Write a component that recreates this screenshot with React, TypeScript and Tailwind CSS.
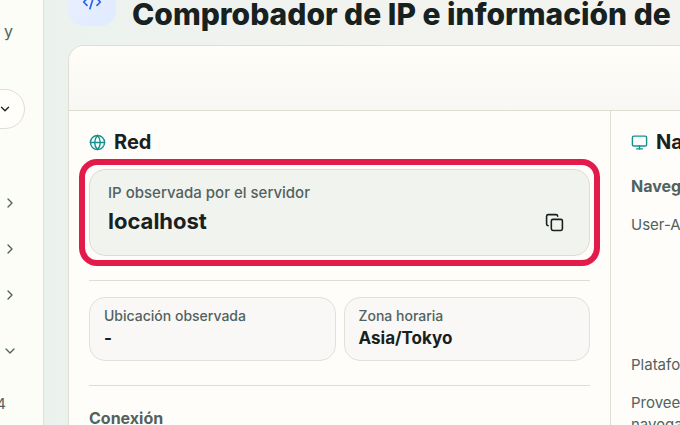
import type { ReactNode } from "react";
import { ChevronDown, ChevronRight, CodeXml, Copy, Globe, Monitor } from "lucide-react";

function PanelTitle({ icon, children }: { icon: ReactNode; children: ReactNode }) {
  return (
    <h2 className="flex h-6 items-center gap-2 text-[20px] leading-6 font-bold">
      <span className="shrink-0 text-[#14918f]">{icon}</span>
      {children}
    </h2>
  );
}

function Fact({ label, value }: { label: string; value: string }) {
  return (
    <div className="h-16 min-w-0 flex-1 rounded-[16px] border border-[#e1e1d8] bg-[#f9f8f6] px-3.5 py-2">
      <dt className="text-[14px] leading-5 font-medium text-[#51625f]">{label}</dt>
      <dd className="text-[17px] leading-6 font-bold">{value}</dd>
    </div>
  );
}

function Sidebar() {
  return (
    <aside className="flex w-11 shrink-0 flex-col items-end overflow-hidden border-r border-[#e2dfd3] bg-[#fdfdf8] text-[#51625f]">
      <p className="mt-[19px] mr-[30px] text-[16px] leading-6">y</p>
      <button
        type="button"
        aria-label="Abrir selector"
        className="mt-[46px] mr-[18px] flex h-10 w-24 shrink-0 items-center justify-end rounded-full border border-[#e0ddd2] bg-[#fffefa] pr-3 text-[#17211f]"
      >
        <ChevronDown size={14} strokeWidth={2.2} />
      </button>
      <nav className="mt-[51px] mr-[25px] flex flex-col items-end">
        <button type="button" aria-label="Grupo 1" className="flex h-[46px] items-center">
          <ChevronRight size={16} />
        </button>
        <button type="button" aria-label="Grupo 2" className="flex h-[46px] items-center">
          <ChevronRight size={16} />
        </button>
        <button type="button" aria-label="Grupo 3" className="flex h-[46px] items-center">
          <ChevronRight size={16} />
        </button>
        <button type="button" aria-label="Grupo 4" className="mt-2.5 flex h-[46px] items-center">
          <ChevronDown size={16} />
        </button>
      </nav>
      <p className="mt-[18px] mr-[37px] text-[15px] leading-6">4</p>
    </aside>
  );
}

export default function App() {
  return (
    <div className="flex h-screen overflow-hidden bg-linear-to-r from-[#eaf2ee] via-[#f2f3ef] to-[#f4f3ef] font-[Inter,'Noto_Sans',sans-serif] text-[#17211f]">
      <Sidebar />
      <main className="flex min-w-0 flex-1 flex-col pl-6">
        <header className="flex h-[26px] shrink-0 items-end gap-4">
          <div className="flex size-12 shrink-0 items-center justify-center rounded-[16px] bg-linear-to-br from-[#eaf0ff] to-[#e0eaff] text-[#2563eb]">
            <CodeXml size={20} />
          </div>
          <h1 className="text-[30px] leading-6 font-extrabold whitespace-nowrap">
            Comprobador de IP e información de
          </h1>
        </header>
        <div className="mt-[19px] flex min-h-0 flex-1 flex-col overflow-hidden rounded-tl-[16px] border-t border-l border-[#e0ddd3] bg-[#fffdf9]">
          <div className="h-[65px] shrink-0 border-b border-[#dfddd2] bg-linear-to-b from-[#fffdf8] to-[#f9f7f4]" />
          <div className="flex min-h-0 flex-1">
            <section className="min-w-0 flex-1 px-5 pt-[19px]">
              <PanelTitle icon={<Globe size={17} strokeWidth={2} />}>Red</PanelTitle>
              <div className="relative mt-[15px] flex h-[87px] items-center justify-between rounded-[16px] border border-[#dddcd3] bg-[#f1f3ef] pr-[25px] pl-[18px]">
                <dl className="-mt-3">
                  <dt className="text-[15px] leading-6 font-medium text-[#51625f]">IP observada por el servidor</dt>
                  <dd className="mt-1 text-[22px] leading-6 font-bold">localhost</dd>
                </dl>
                <button type="button" aria-label="Copiar IP" className="mt-5">
                  <Copy size={19} />
                </button>
                <span className="pointer-events-none absolute -inset-[11px] rounded-[18px] border-[6px] border-[#e31b4a]" />
              </div>
              <dl className="mt-6 flex gap-2 border-y border-[#dfded4] pt-4 pb-6">
                <Fact label="Ubicación observada" value="-" />
                <Fact label="Zona horaria" value="Asia/Tokyo" />
              </dl>
              <h3 className="mt-5 text-[16px] leading-6 font-bold text-[#51625f]">Conexión</h3>
            </section>
            <section className="w-[70px] shrink-0 overflow-hidden border-l border-[#dfded4] pt-[19px] pl-5 whitespace-nowrap text-[#51625f]">
              <div className="text-[#17211f]">
                <PanelTitle icon={<Monitor size={17} strokeWidth={2} />}>Navegador</PanelTitle>
              </div>
              <h3 className="mt-5 text-[16px] leading-6 font-bold">Navegador</h3>
              <dl className="text-[15px] leading-[22px]">
                <dt className="mt-4">User-Agent</dt>
                <dt className="mt-[118px]">Plataforma</dt>
                <dt className="mt-4">
                  Proveedor del
                  <br />
                  navegador
                </dt>
              </dl>
            </section>
          </div>
        </div>
      </main>
    </div>
  );
}
